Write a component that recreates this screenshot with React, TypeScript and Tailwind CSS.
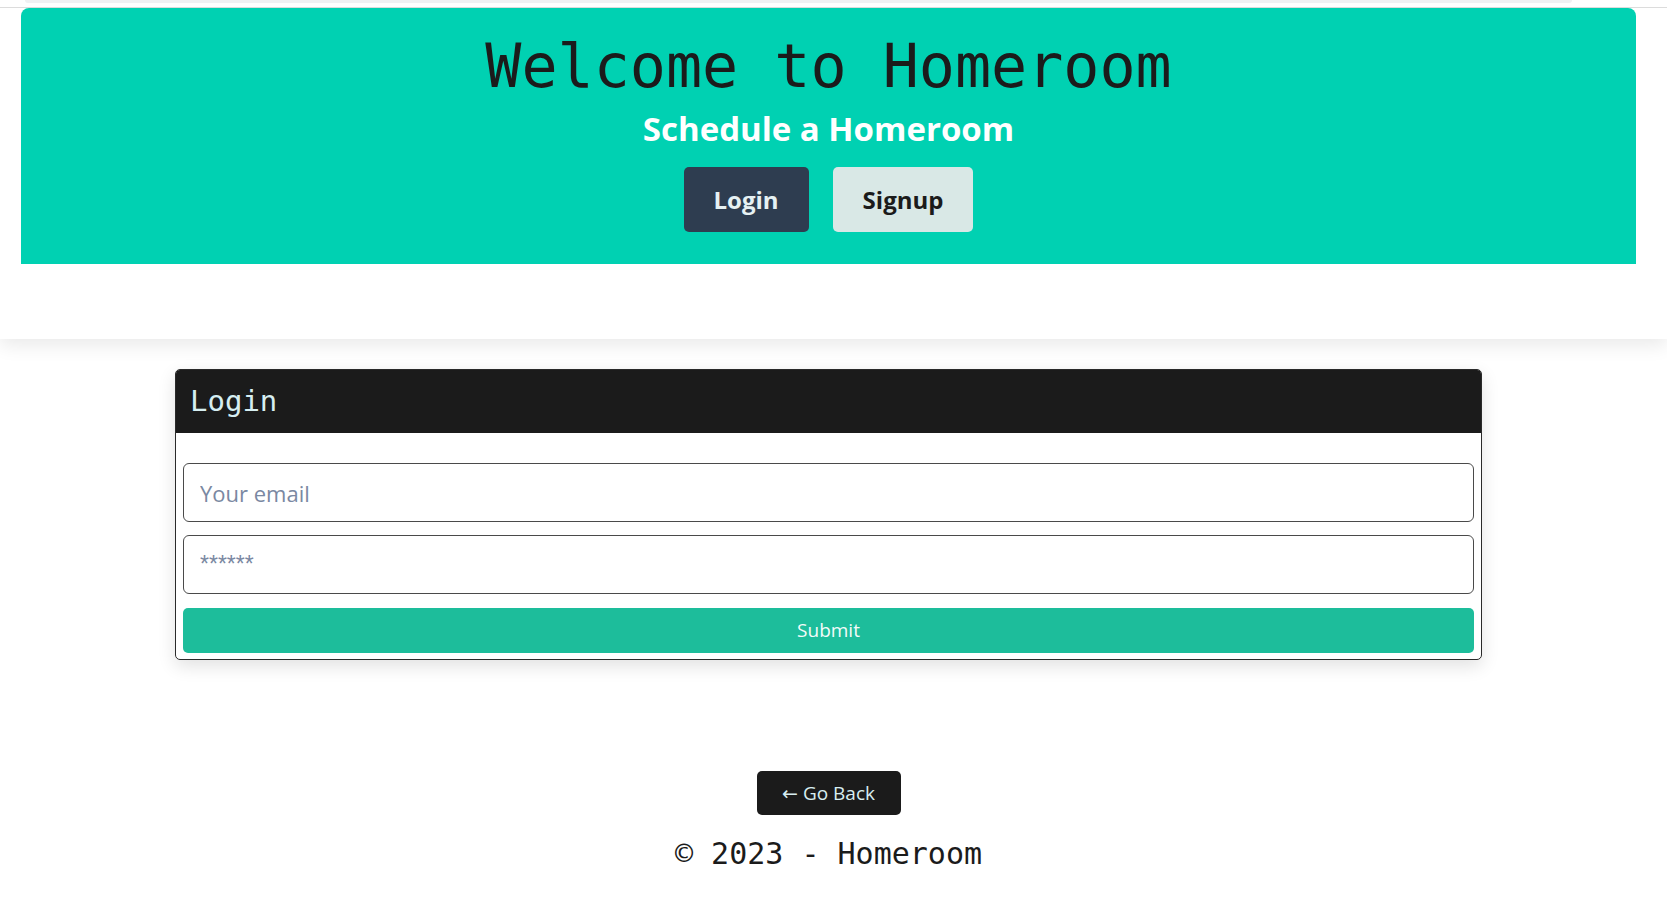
import React from "react";

export default function App() {
  return (
    <div className="min-h-screen bg-white font-['Open_Sans',sans-serif] text-[#1b1b1b]">
      {/* header */}
      <header className="relative z-10 bg-white shadow-[0_6px_18px_rgba(0,0,0,0.09)]">
        <div className="ml-[25px] mr-[95px] h-[3px] rounded-b-md bg-[#f0f1f3]" />
        <div className="h-[4px]" />
        <div className="border-t border-[#dcdcdc]" />
        <div className="ml-[21px] mr-[31px] flex flex-col items-center rounded-t-lg bg-[#00d1b2] pt-[28px] pb-[32px]">
          <h1 className="font-['DejaVu_Sans_Mono',monospace] text-[60px] leading-none text-[#1b1b1b]">
            Welcome to Homeroom
          </h1>
          <h2 className="mt-[16px] text-[33px] font-bold leading-none text-white">
            Schedule a Homeroom
          </h2>
          <div className="mt-[22px] flex gap-[24px]">
            <button className="h-[65px] rounded-[5px] bg-[#2e3d50] px-[30px] text-[24px] font-bold text-[#e6f1f3]">
              Login
            </button>
            <button className="h-[65px] rounded-[5px] bg-[#d9e8e6] px-[30px] text-[24px] font-bold text-[#1b1b1b]">
              Signup
            </button>
          </div>
        </div>
        <div className="h-[75px]" />
      </header>

      {/* login card */}
      <main className="flex flex-col items-center pt-[30px] pr-[10px]">
        <div className="w-[1307px] overflow-hidden rounded-[5px] border border-[#2a2a2a] bg-white shadow-[0_6px_18px_rgba(0,0,0,0.12)]">
          <div className="flex h-[63px] items-center bg-[#1b1b1b] px-[14px]">
            <span className="font-['DejaVu_Sans_Mono',monospace] text-[29px] text-[#d6eef1]">
              Login
            </span>
          </div>
          <form className="flex flex-col gap-[13px] px-[7px] pt-[30px] pb-[6px]">
            <input
              type="email"
              placeholder="Your email"
              className="h-[59px] rounded-[6px] border border-[#4a4a4a] px-[16px] text-[22px] outline-none placeholder:text-[#7a88a2]"
            />
            <input
              type="password"
              placeholder="******"
              className="h-[59px] rounded-[6px] border border-[#4a4a4a] px-[16px] font-['Liberation_Sans',sans-serif] text-[23px] outline-none placeholder:text-[#7a88a2]"
            />
            <button
              type="button"
              className="mt-px h-[45px] rounded-[5px] bg-[#1dbd9b] text-[19px] text-[#f2fbf9]"
            >
              Submit
            </button>
          </form>
        </div>

        <button className="mt-[111px] flex h-[44px] w-[144px] items-center justify-center gap-[5px] rounded-[5px] bg-[#1b1b1b] text-[19px] text-[#d8eef1]">
          <span className="font-['DejaVu_Sans',sans-serif] text-[19px]">←</span>
          <span>Go Back</span>
        </button>
        <p className="mt-[24px] font-['DejaVu_Sans_Mono',monospace] text-[30px] leading-none text-[#1b1b1b]">
          © 2023 - Homeroom
        </p>
      </main>
    </div>
  );
}
